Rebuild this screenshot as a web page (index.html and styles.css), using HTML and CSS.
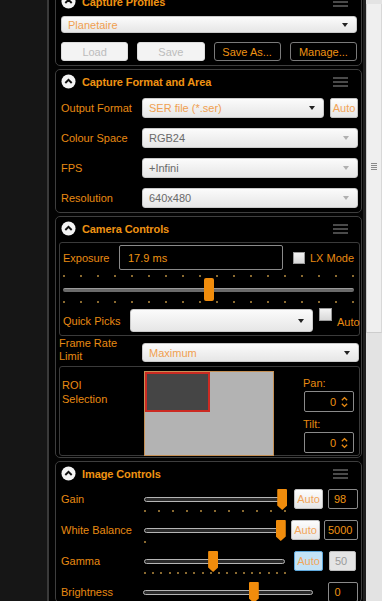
FILE: index.html
```html
<!DOCTYPE html>
<html>
<head>
<meta charset="utf-8">
<link rel="stylesheet" href="styles.css">
</head>
<body>
<div class="app">
  <div class="side"></div>
  <div class="main">
    <div class="panels">
      <!-- Capture Profiles -->
      <section class="panel p1">
        <div class="phead">
          <span class="toggle"><svg viewBox="0 0 16 16" width="15" height="15"><circle cx="8" cy="8" r="7.5" fill="#f4f4f4"/><path d="M4.6 9.6 L8 6.2 L11.4 9.6" fill="none" stroke="#111" stroke-width="2"/></svg></span>
          <span class="ptitle">Capture Profiles</span>
          <span class="menu"><i></i><i></i><i></i></span>
        </div>
        <div class="pbody b1">
          <div class="select act tall"><span>Planetaire</span><b class="arrow"></b></div>
          <div class="btnrow">
            <button class="btn dis">Load</button>
            <button class="btn dis">Save</button>
            <button class="btn dark">Save As...</button>
            <button class="btn dark">Manage...</button>
          </div>
        </div>
      </section>

      <!-- Capture Format and Area -->
      <section class="panel">
        <div class="phead">
          <span class="toggle"><svg viewBox="0 0 16 16" width="15" height="15"><circle cx="8" cy="8" r="7.5" fill="#f4f4f4"/><path d="M4.6 9.6 L8 6.2 L11.4 9.6" fill="none" stroke="#111" stroke-width="2"/></svg></span>
          <span class="ptitle">Capture Format and Area</span>
          <span class="menu"><i></i><i></i><i></i></span>
        </div>
        <div class="pbody b2">
          <div class="frow">
            <label>Output Format</label>
            <div class="fcell">
              <div class="select act"><span>SER file (*.ser)</span><b class="arrow"></b></div>
              <button class="auto wide">Auto</button>
            </div>
          </div>
          <div class="frow">
            <label>Colour Space</label>
            <div class="select off"><span>RGB24</span><b class="arrow"></b></div>
          </div>
          <div class="frow">
            <label>FPS</label>
            <div class="select off"><span>+Infini</span><b class="arrow"></b></div>
          </div>
          <div class="frow last">
            <label>Resolution</label>
            <div class="select off"><span>640x480</span><b class="arrow"></b></div>
          </div>
        </div>
      </section>

      <!-- Camera Controls -->
      <section class="panel">
        <div class="phead">
          <span class="toggle"><svg viewBox="0 0 16 16" width="15" height="15"><circle cx="8" cy="8" r="7.5" fill="#f4f4f4"/><path d="M4.6 9.6 L8 6.2 L11.4 9.6" fill="none" stroke="#111" stroke-width="2"/></svg></span>
          <span class="ptitle">Camera Controls</span>
          <span class="menu"><i></i><i></i><i></i></span>
        </div>
        <div class="pbody b3">
          <div class="subbox expo">
            <div class="exrow">
              <label class="exlabel">Exposure</label>
              <div class="textbox">17.9 ms</div>
              <span class="check"></span>
              <span class="lx">LX Mode</span>
            </div>
            <div class="exslider">
              <div class="dots top"><i></i><i></i><i></i><i></i><i></i><i></i><i></i><i></i><i></i><i></i><i></i><i></i><i></i><i></i><i></i><i></i><i></i><i></i></div>
              <div class="extrack"></div>
              <div class="exthumb" style="left:50%"></div>
              <div class="dots bot"><i></i><i></i><i></i><i></i><i></i><i></i><i></i><i></i><i></i><i></i><i></i><i></i><i></i><i></i><i></i><i></i><i></i><i></i></div>
            </div>
            <div class="qprow">
              <label class="qplabel">Quick Picks</label>
              <div class="select act qp"><span></span><b class="arrow"></b></div>
              <span class="check qcheck"></span>
              <span class="qauto">Auto</span>
            </div>
          </div>
          <div class="frrow">
            <label>Frame Rate<br>Limit</label>
            <div class="select act frsel"><span>Maximum</span><b class="arrow"></b></div>
          </div>
          <div class="subbox roi">
            <label class="roilabel">ROI<br>Selection</label>
            <div class="canvas"><div class="roirect"></div></div>
            <div class="pt">
              <label>Pan:</label>
              <div class="spin"><span>0</span><svg viewBox="0 0 10 16" width="9" height="14"><path d="M2 6 L5 3 L8 6 M2 10 L5 13 L8 10" fill="none" stroke="#e88a12" stroke-width="1.6"/></svg></div>
              <label class="tilt">Tilt:</label>
              <div class="spin"><span>0</span><svg viewBox="0 0 10 16" width="9" height="14"><path d="M2 6 L5 3 L8 6 M2 10 L5 13 L8 10" fill="none" stroke="#e88a12" stroke-width="1.6"/></svg></div>
            </div>
          </div>
        </div>
      </section>

      <!-- Image Controls -->
      <section class="panel">
        <div class="phead">
          <span class="toggle"><svg viewBox="0 0 16 16" width="15" height="15"><circle cx="8" cy="8" r="7.5" fill="#f4f4f4"/><path d="M4.6 9.6 L8 6.2 L11.4 9.6" fill="none" stroke="#111" stroke-width="2"/></svg></span>
          <span class="ptitle">Image Controls</span>
          <span class="menu"><i></i><i></i><i></i></span>
        </div>
        <div class="pbody b4">
          <div class="irow">
            <label>Gain</label>
            <div class="islider"><div class="itrack"></div><div class="ithumb" style="left:96%"></div></div>
            <button class="auto">Auto</button>
            <div class="vbox">98</div>
          </div>
          <div class="iticks"><div class="dots small"><i></i><i></i><i></i><i></i><i></i><i></i><i></i><i></i><i></i><i></i><i></i></div></div>
          <div class="irow">
            <label>White Balance</label>
            <div class="islider wb"><div class="itrack"></div><div class="ithumb" style="left:97%"></div></div>
            <button class="auto">Auto</button>
            <div class="vbox wide">5000</div>
          </div>
          <div class="iticks"><div class="dots small single"><i></i></div></div>
          <div class="irow">
            <label>Gamma</label>
            <div class="islider"><div class="itrack"></div><div class="ithumb" style="left:48%"></div></div>
            <button class="auto blue">Auto</button>
            <div class="vbox light">50</div>
          </div>
          <div class="iticks"><div class="dots small"><i></i><i></i><i></i><i></i><i></i><i></i><i></i><i></i><i></i><i></i><i></i><i></i><i></i><i></i><i></i><i></i><i></i><i></i></div></div>
          <div class="irow">
            <label>Brightness</label>
            <div class="islider br"><div class="itrack"></div><div class="ithumb" style="left:64%"></div></div>
            <div class="vbox">0</div>
          </div>
        </div>
      </section>
    </div>
    <div class="scrollbar"><div class="sthumb"><span class="grip"><i></i><i></i><i></i><i></i></span></div></div>
  </div>
</div>
</body>
</html>
```

FILE: styles.css
```css
* { box-sizing: border-box; }
html, body { margin: 0; padding: 0; }
body {
  background: #161616;
  font-family: "Liberation Sans", Arial, sans-serif;
  font-size: 11px;
  color: #e88a12;
  width: 382px;
  height: 601px;
  overflow: hidden;
}
.app { display: flex; height: 601px; overflow: hidden; }
.side { width: 49px; flex-shrink: 0; background: #161616; border-right: 2px solid #3a3a3a; }
.main { flex: 1; min-width: 0; display: flex; background: #030303; }
.panels { flex: 1; min-width: 0; padding: 0 1px 0 6px; overflow: hidden; }

.panel {
  border: 1px solid #3e3e3e;
  border-radius: 5px;
  background: #000;
  margin-bottom: 3px;
}
.p1 { margin-top: -11px; }

.phead {
  height: 23px;
  display: flex;
  align-items: center;
  padding: 0 13px 0 5px;
  gap: 6px;
}
.toggle { width: 15px; height: 15px; display: flex; }
.ptitle { flex: 1; font-weight: bold; font-size: 11px; color: #ef9313; letter-spacing: -0.1px; }
.menu { width: 15px; display: flex; flex-direction: column; gap: 2px; }
.menu i { display: block; height: 2px; background: #4a4a4a; }

/* selects */
.select {
  height: 20px;
  border: 1px solid #c9c9c9;
  border-radius: 3px;
  background: linear-gradient(#fbfbfb, #e6e6e6);
  display: flex;
  align-items: center;
  padding: 0 8px 0 6px;
  color: #6a6a6a;
}
.select span { flex: 1; white-space: nowrap; }
.select.act span { color: #f0a050; }
.select .arrow {
  width: 0; height: 0;
  border-left: 3.5px solid transparent;
  border-right: 3.5px solid transparent;
  border-top: 4px solid #222;
}
.select.off .arrow { border-top-color: #b0b0b0; }
.select.tall { height: 17px; }

/* panel 1 */
.b1 { padding: 3px 4px 4px 5px; }
.btnrow { display: flex; gap: 9px; margin-top: 9px; }
.btn {
  flex: 1;
  height: 19px;
  border-radius: 3px;
  font-family: inherit;
  font-size: 11px;
  padding: 0;
}
.btn.dis { background: #f3f3f3; border: 1px solid #dcdcdc; color: #bcbcbc; }
.btn.dark { background: #000; border: 1px solid #7a7a7a; color: #ef9313; }

/* panel 2 */
.b2 { padding: 5px 3px 4px 5px; }
.frow {
  display: grid;
  grid-template-columns: 81px 1fr;
  align-items: center;
  height: 20px;
  margin-bottom: 10px;
}
.frow.last { margin-bottom: 0; }
.fcell { display: flex; gap: 6px; }
.fcell .select { flex: 1; }

.auto {
  height: 20px;
  width: 29px;
  padding: 0;
  border: 1px solid #c0c0c0;
  border-radius: 2px;
  background: linear-gradient(#fdfdfd, #e6e6e6);
  color: #f2a55a;
  font-family: inherit;
  font-size: 11px;
}
.auto.wide { width: 28px; }
.auto.blue { background: #c3e2f6; border-color: #5ea8dc; }

/* panel 3 */
.b3 { padding: 2px 1px 1px 3px; }
.subbox { border: 1px solid #3a3a3a; border-radius: 3px; }
.expo { padding: 2px 5px 3px 3px; }
.exrow { display: flex; align-items: center; height: 25px; }
.exlabel { width: 56px; }
.textbox {
  width: 164px;
  height: 25px;
  border: 1px solid #8a8a8a;
  border-radius: 2px;
  padding: 0 8px;
  display: flex;
  align-items: center;
  color: #ef9313;
}
.check {
  width: 12px; height: 12px;
  margin-left: 10px;
  background: linear-gradient(#f4f4f4, #d8d8d8);
  border: 1px solid #9a9a9a;
}
.lx { margin-left: 5px; white-space: nowrap; }

.exslider { position: relative; height: 35px; }
.dots { display: flex; justify-content: space-between; }
.dots i { display: block; width: 2px; height: 2px; background: #8a6a30; }
.exslider .dots.top { position: absolute; left: 0; right: 0; top: 5px; }
.exslider .dots.bot { position: absolute; left: 0; right: 0; top: 31px; }
.extrack {
  position: absolute; left: 0; right: 0; top: 18px;
  height: 4px;
  border-radius: 2px;
  background: #6a6a6a;
  border-top: 1px solid #9a9a9a;
}
.exthumb {
  position: absolute; top: 8px;
  width: 10px; height: 23px;
  margin-left: -5px;
  background: #f08c0c;
  border-radius: 2px;
}
.qprow { display: flex; align-items: flex-start; height: 23px; margin-top: 4px; }
.qplabel { width: 67px; align-self: center; }
.select.qp { width: 183px; height: 23px; }
.qcheck { margin-left: 6px; margin-top: -1px; width: 13px; height: 13px; }
.qauto { margin-left: 5px; margin-top: 7px; margin-right: -10px; }

.frrow {
  display: grid;
  grid-template-columns: 83px 1fr;
  align-items: center;
  height: 27px;
  padding-right: 1px;
}
.frrow label { line-height: 13px; }
.frsel { height: 19px; margin-top: 6px; }

.roi {
  margin-top: 3px;
  display: grid;
  grid-template-columns: 82px 130px 1fr;
  padding: 4px 0 0 2px;
  height: 90px;
}
.roilabel { line-height: 14px; padding-top: 7px; }
.canvas {
  background: #b3b3b3;
  border: 1px solid #c59055;
  height: 85px;
  display: flex;
  align-items: flex-start;
}
.roirect { width: 65px; height: 40px; background: #454545; border: 2px solid #cc2a22; }
.pt { padding: 6px 0 0 30px; display: flex; flex-direction: column; }
.pt label { height: 14px; margin-left: -1px; }
.pt .tilt { margin-top: 6px; }
.spin {
  width: 50px; height: 21px;
  border: 1px solid #8a8a8a;
  border-radius: 2px;
  display: flex;
  align-items: center;
  justify-content: flex-end;
  gap: 4px;
  padding-right: 4px;
  color: #ef9313;
}

/* panel 4 */
.b4 { padding: 4px 3px 0 5px; }
.irow { display: flex; align-items: center; height: 20px; }
.irow label { width: 83px; white-space: nowrap; }
.islider { position: relative; width: 144px; height: 20px; }
.islider.br { width: 177px; margin-right: 7px; }
.itrack {
  position: absolute; left: 0; right: 3px; top: 8px;
  height: 5px;
  border: 1px solid #b5b5b5;
  border-radius: 3px;
  background: #2a2a2a;
}
.ithumb {
  position: absolute; top: 0;
  width: 10px; height: 21px;
  margin-left: -5px;
  background: #f08c0c;
  clip-path: polygon(0 0, 100% 0, 100% 78%, 50% 100%, 0 78%);
  border-radius: 1px;
}
.irow .auto { margin-left: 6px; }
.islider.wb { width: 141px; }
.vbox {
  margin-left: 5px;
  width: 30px; height: 20px;
  border: 1px solid #8a8a8a;
  border-radius: 2px;
  padding-left: 5px;
  display: flex; align-items: center;
  color: #ef9313;
}
.vbox.wide { width: 34px; margin-left: 4px; padding-left: 3px; }
.vbox.light { background: #e4e4e4; color: #9a9a9a; border-color: #bbb; width: 27px; margin-left: 6px; }
.iticks { height: 11px; padding: 1px 0 0 83px; }
.iticks .dots { width: 142px; }
.iticks .dots.single { justify-content: flex-start; }

/* scrollbar */
.scrollbar { width: 19px; flex-shrink: 0; border-left: 3px solid #1f1f1f; background: #e3e3e3; }
.sthumb {
  margin-top: 4px;
  height: 329px;
  background: #efefef;
  border-left: 1px solid #cdcdcd;
  border-right: 1px solid #d8d8d8;
  border-bottom: 1px solid #cdcdcd;
  display: flex;
  align-items: center;
  justify-content: center;
}
.grip { display: flex; flex-direction: column; gap: 1px; width: 6px; margin-top: -3px; }
.grip i { display: block; height: 1px; background: #8a8a8a; }
```
